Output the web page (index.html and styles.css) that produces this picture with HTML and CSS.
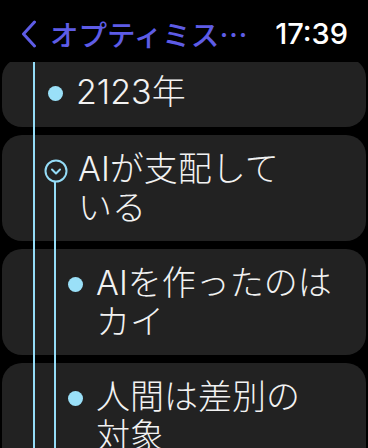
FILE: index.html
```html
<!DOCTYPE html>
<html lang="ja">
<head>
<meta charset="utf-8">
<link rel="stylesheet" href="styles.css">
</head>
<body>
<div class="screen">
  <header class="topbar">
    <div class="back">
      <svg class="chev" width="18" height="28" viewBox="0 0 18 28"><path d="M14.5 2 L3.5 14 L14.5 26" fill="none" stroke="#5e5ce6" stroke-width="3" stroke-linecap="round" stroke-linejoin="round"/></svg>
      <span class="title">オプティミス…</span>
    </div>
    <span class="time">17:39</span>
  </header>
  <main class="list">
    <div class="guide guide-root"></div>
    <div class="guide guide-child"></div>
    <div class="card">
      <span class="marker"><span class="dot"></span></span>
      <span class="text">2123年</span>
    </div>
    <div class="card">
      <span class="marker">
        <svg class="toggle" width="24" height="24" viewBox="0 0 24 24"><circle cx="12" cy="12" r="10.5" fill="none" stroke="#94dcf7" stroke-width="2"/><path d="M8 10.5 L12 14.5 L16 10.5" fill="none" stroke="#94dcf7" stroke-width="2" stroke-linecap="round" stroke-linejoin="round"/></svg>
      </span>
      <span class="text">AIが支配して<span class="nw">いる</span></span>
    </div>
    <div class="card child">
      <span class="marker"><span class="dot"></span></span>
      <span class="text">AIを作ったのは<span class="nw">カイ</span></span>
    </div>
    <div class="card child">
      <span class="marker"><span class="dot"></span></span>
      <span class="text">人間は差別の<span class="nw">対象</span></span>
    </div>
  </main>
</div>
</body>
</html>
```

FILE: styles.css
```css
* { box-sizing: border-box; }
html, body {
  margin: 0;
  padding: 0;
  background: #000;
}
.screen {
  position: relative;
  width: 368px;
  height: 448px;
  overflow: hidden;
  background: #000;
  font-family: Inter, "Noto Sans CJK JP", sans-serif;
}
.topbar {
  position: absolute;
  top: 0;
  left: 0;
  right: 0;
  height: 62px;
  z-index: 3;
  background: #000;
  display: flex;
  align-items: center;
  justify-content: space-between;
  padding: 6px 20px 0 20px;
}
.back {
  display: flex;
  align-items: center;
  gap: 12px;
}
.chev { display: block; }
.title {
  font-family: "Noto Sans CJK JP", sans-serif;
  font-size: 28.5px;
  font-weight: 500;
  color: #5e5ce6;
  line-height: 34px;
}
.time {
  font-family: Inter, sans-serif;
  font-size: 29px;
  font-weight: 500;
  color: #fff;
  line-height: 34px;
}
.list {
  position: relative;
  display: flex;
  flex-direction: column;
  gap: 8px;
  padding: 58px 2px 0 2px;
}
.guide {
  position: absolute;
  width: 2px;
  background: #94dcf7;
  bottom: 0;
  z-index: 1;
}
.guide-root { left: 33px; top: 0; }
.guide-child { left: 54px; top: 182px; }
.card {
  display: flex;
  align-items: flex-start;
  gap: 10px;
  background: #222222;
  border-radius: 20px;
  padding: 14px 24px 14px 42px;
  min-height: 67px;
}
.card.child { padding-left: 62px; }
.marker {
  flex: 0 0 22px;
  height: 39px;
  display: flex;
  align-items: center;
  justify-content: center;
  margin-top: 2px;
  position: relative;
  z-index: 2;
}
.dot {
  width: 15px;
  height: 15px;
  border-radius: 50%;
  background: #9ae0f8;
}
.toggle { display: block; flex: none; }
.text {
  font-size: 34px;
  line-height: 39px;
  color: #f2f2f2;
  font-weight: 300;
}
.nw { white-space: nowrap; }
```
